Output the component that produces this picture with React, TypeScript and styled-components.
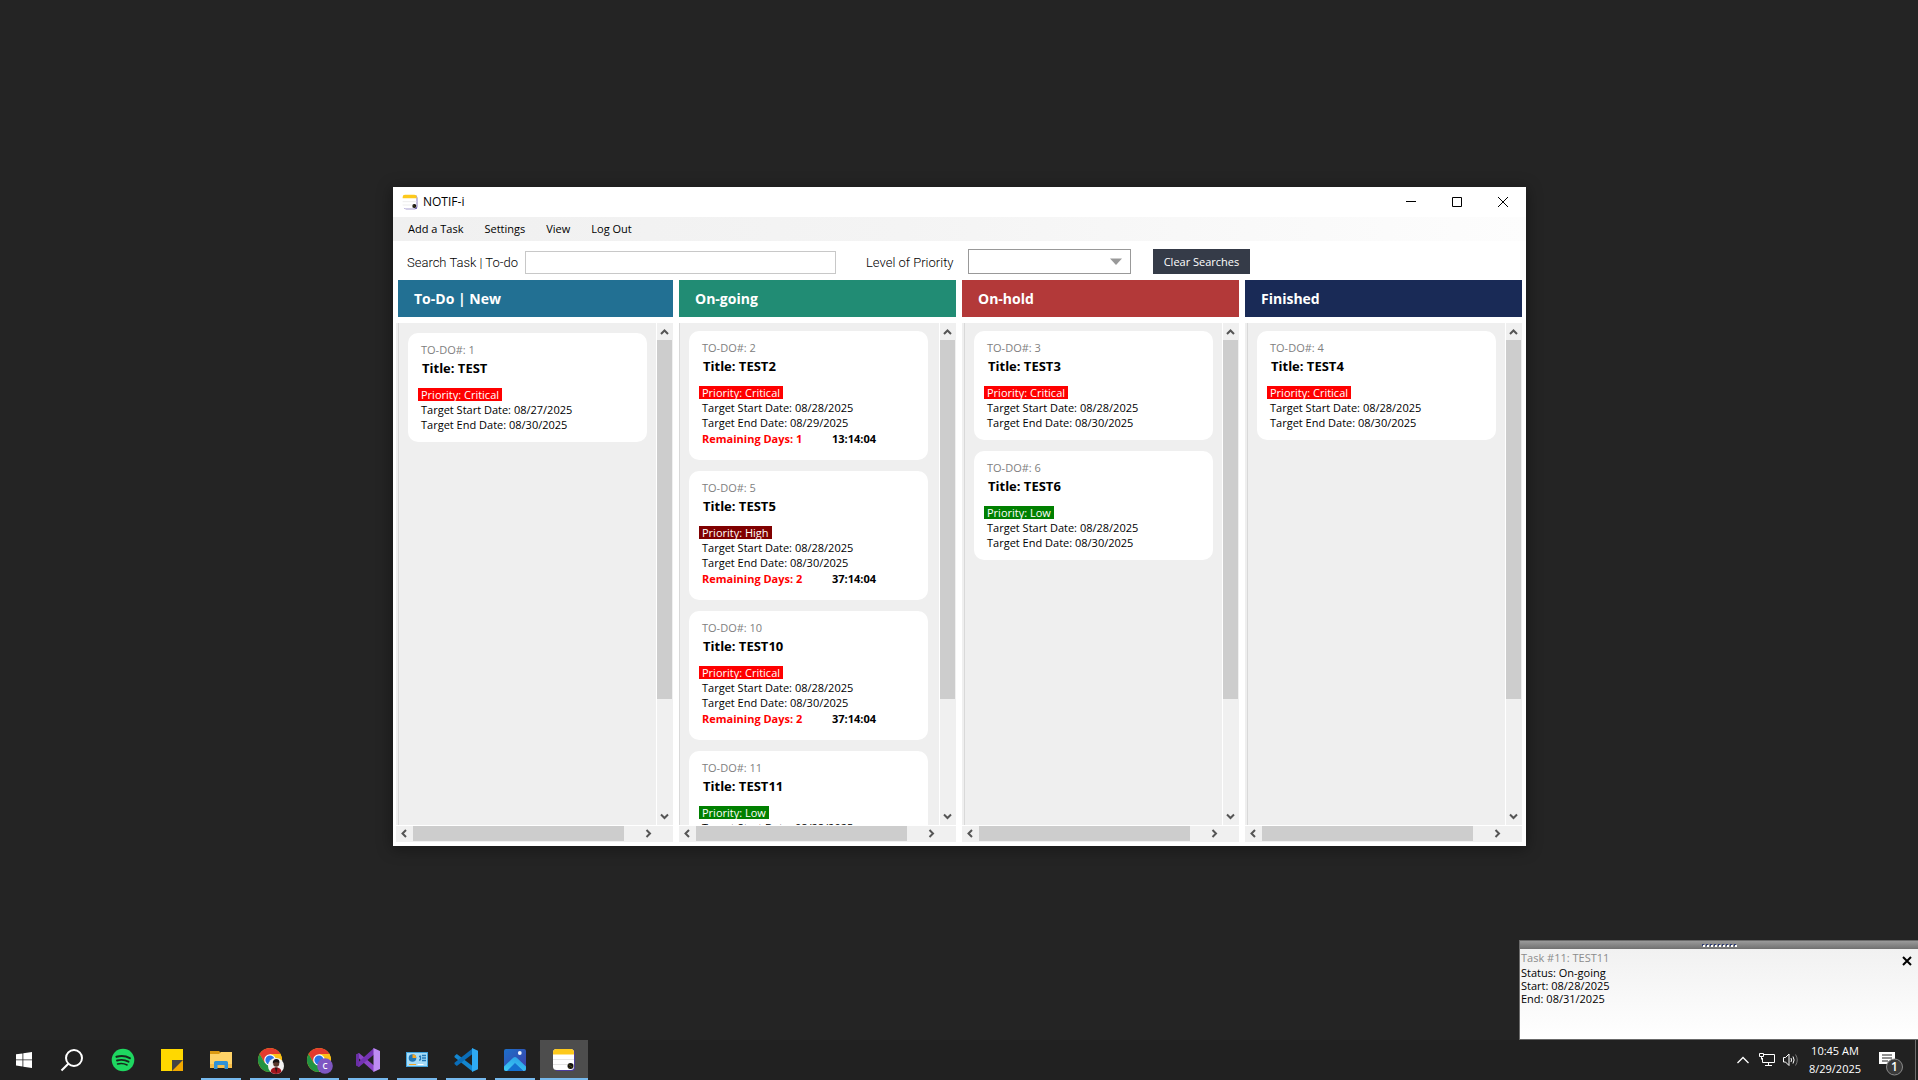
import React from 'react';
import styled, { createGlobalStyle, css } from 'styled-components';

const GlobalStyle = createGlobalStyle`
  *, *::before, *::after { box-sizing: border-box; }
  body { margin: 0; background: #242424; }
  body, button, input, select { font-family: "Open Sans", "Noto Sans", sans-serif; font-size: 11px; }
  button { margin: 0; padding: 0; border: 0; background: none; color: inherit; cursor: pointer; }
  svg { display: block; flex: none; }
`;

/* ---------- desktop ---------- */

const Desktop = styled.div`
  display: flex;
  flex-direction: column;
  height: 100vh;
  overflow: hidden;
`;

const Workspace = styled.main`
  position: relative;
  flex: 1;
  min-height: 0;
  background: #242424;
`;

/* ---------- application window ---------- */

const AppWindow = styled.section`
  position: absolute;
  inset: 187px 392px 194px 393px;
  display: flex;
  flex-direction: column;
  background: #fff;
  box-shadow: 0 2px 14px 1px rgba(0, 0, 0, 0.38);
`;

const TitleBar = styled.header`
  display: flex;
  align-items: center;
  height: 30px;
  padding-left: 9px;
`;

const WindowTitle = styled.h1`
  flex: 1;
  margin: 0 0 0 5px;
  font-size: 12px;
  font-weight: 400;
  line-height: 16px;
  color: #000;
`;

const WindowButton = styled.button`
  display: flex;
  align-items: center;
  justify-content: center;
  width: 46px;
  height: 28px;
`;

const MenuBar = styled.nav`
  display: flex;
  align-items: center;
  gap: 21px;
  height: 24px;
  padding-left: 15px;
  background: linear-gradient(to right, #f0f0f0, #f4f4f4 45%, #fdfdfd);
`;

const MenuButton = styled.button`
  font-weight: 500;
  line-height: 24px;
  color: #000;
`;

const Toolbar = styled.form`
  display: flex;
  align-items: flex-end;
  height: 39px;
  padding: 0 14px 6px;
`;

const Field = styled.div`
  display: flex;
  align-items: flex-end;
  min-width: 0;
`;

const FieldLabel = styled.label<{ $width: number }>`
  width: ${(p) => p.$width}px;
  flex: none;
  font-family: Roboto, "Open Sans", sans-serif;
  font-size: 13px;
  font-weight: 300;
  line-height: 22px;
  white-space: nowrap;
  color: #000;
`;

const SearchInput = styled.input`
  width: 311px;
  height: 23px;
  margin-right: 30px;
  padding: 0 4px;
  border: 1px solid #c8c8c8;
  border-radius: 0;
  background: #fff;
  outline: none;
`;

const SelectBox = styled.div`
  display: grid;
  align-items: center;
  width: 163px;
  margin-right: 22px;

  > * { grid-area: 1 / 1; }
  svg { justify-self: end; margin-right: 9px; pointer-events: none; }
`;

const PrioritySelect = styled.select`
  width: 100%;
  height: 25px;
  padding: 0 6px;
  border: 1px solid #999;
  border-radius: 0;
  background: #fff;
  appearance: none;
  outline: none;
`;

const ClearButton = styled.button`
  width: 97px;
  height: 25px;
  background: #353b48;
  color: #fff;
`;

/* ---------- board ---------- */

const Board = styled.div`
  display: grid;
  flex: 1;
  grid-template-columns: repeat(4, minmax(0, 1fr));
  gap: 6px;
  min-height: 0;
  padding: 0 4px 4px 3px;
`;

const ColumnBox = styled.section`
  display: flex;
  flex-direction: column;
  min-height: 0;
`;

const ColumnHeader = styled.h2<{ $color: string; $gutter: number }>`
  margin: 0 0 6px ${(p) => p.$gutter}px;
  padding: 1px 0 0 16px;
  background: ${(p) => p.$color};
  color: #fff;
  font-size: 14px;
  font-weight: 700;
  line-height: 36px;
`;

const ScrollPanel = styled.div`
  display: grid;
  grid-template: minmax(0, 1fr) 16px / minmax(0, 1fr) 16px;
  gap: 1px;
  flex: 1;
  min-height: 0;
`;

const CardList = styled.ul<{ $line: number; $gutter: number }>`
  display: flex;
  flex-direction: column;
  gap: 11px;
  margin: 0;
  padding: ${(p) => p.$gutter + 8}px ${(p) => 11 - p.$line}px 0 ${(p) => p.$line + 10}px;
  list-style: none;
  overflow: hidden;
  background: linear-gradient(
    to right,
    #efefef ${(p) => p.$line}px,
    #d9d9d9 ${(p) => p.$line}px ${(p) => p.$line + 1}px,
    #efefef ${(p) => p.$line + 1}px
  );
`;

const ScrollTrack = styled.div<{ $horizontal?: boolean }>`
  display: flex;
  flex-direction: column;
  padding-right: 1px;
  background: #f0f0f0;
  ${(p) => p.$horizontal && css`
    flex-direction: row;
    grid-column: 1 / -1;
    padding: 0 17px 1px 0;
  `}
`;

const ScrollThumb = styled.div<{ $share: number }>`
  flex: ${(p) => p.$share} 1 0;
  background: #cdcdcd;
`;

const ScrollRest = styled.div<{ $share: number }>`
  flex: ${(p) => p.$share} 1 0;
`;

const ScrollArrow = styled.button`
  display: flex;
  align-items: center;
  justify-content: center;
  flex: 0 0 17px;
`;

const CardBox = styled.li`
  display: flex;
  flex: none;
  flex-direction: column;
  align-items: flex-start;
  padding: 9px 10px 10px;
  border-radius: 10px;
  background: #fff;
  color: #000;
`;

const CardId = styled.span`
  padding-left: 3px;
  line-height: 16px;
  color: #808080;
`;

const CardTitle = styled.h3`
  margin: 0 0 10px;
  padding-left: 4px;
  font-size: 13px;
  font-weight: 700;
  line-height: 20px;
`;

const PriorityTag = styled.span<{ $color: string }>`
  margin-bottom: 1px;
  padding: 0 3px;
  background: ${(p) => p.$color};
  color: #fff;
  line-height: 13px;
`;

const CardDate = styled.span`
  padding-left: 3px;
  line-height: 15px;
`;

const Countdown = styled.div`
  display: grid;
  grid-template-columns: 130px auto;
  margin-bottom: 2px;
  padding-left: 3px;
  font-weight: 700;
  line-height: 18px;
`;

const Remaining = styled.span`
  color: #f00;
`;

/* ---------- toast ---------- */

const Toast = styled.aside`
  position: absolute;
  right: 0;
  bottom: 0;
  width: 399px;
  height: 100px;
  border: solid #6a6a6a;
  border-width: 1px 0 1px 1px;
  background: linear-gradient(#f0f0f0, #fff);
  color: #000;
`;

const ToastGrip = styled.div`
  display: flex;
  align-items: center;
  justify-content: center;
  height: 8px;
  background: linear-gradient(#9a9a9a, #707070);
`;

const ToastBody = styled.div`
  display: flex;
  justify-content: space-between;
  align-items: flex-start;
  padding: 0 5px 0 1px;
`;

const ToastText = styled.div`
  display: flex;
  flex-direction: column;
  line-height: 13px;
`;

const ToastTitle = styled.strong`
  font-weight: 400;
  line-height: 17px;
  color: #8c8c8c;
`;

const ToastClose = styled.button`
  display: flex;
  align-items: center;
  justify-content: center;
  width: 12px;
  height: 24px;
`;

/* ---------- taskbar ---------- */

const Taskbar = styled.footer`
  display: flex;
  justify-content: space-between;
  flex: none;
  height: 40px;
  background: #212121;
  color: #fff;
`;

const TaskGroup = styled.div`
  display: flex;
  gap: 1px;
`;

const SystemGroup = styled.div`
  display: flex;
  margin-right: 2px;
`;

const TaskButton = styled.button<{ $state?: 'open' | 'active' }>`
  display: flex;
  align-items: center;
  justify-content: center;
  width: 48px;
  height: 40px;
  ${(p) => p.$state === 'open' && css`
    background: linear-gradient(#76b9ed, #76b9ed) center bottom / 40px 2px no-repeat;
  `}
  ${(p) => p.$state === 'active' && css`
    background: linear-gradient(#76b9ed, #76b9ed) center bottom / 100% 2px no-repeat, #4d4d4d;
  `}
`;

const Tray = styled.div`
  display: flex;
  align-items: stretch;
  padding-right: 2px;
`;

const TrayButton = styled.button<{ $width?: number }>`
  display: flex;
  align-items: center;
  justify-content: center;
  width: ${(p) => p.$width ?? 24}px;
`;

const Clock = styled.time`
  display: flex;
  flex-direction: column;
  justify-content: center;
  width: 64px;
  text-align: center;
  line-height: 18px;
`;

const ShowDesktop = styled.button`
  width: 1px;
  background: #6e6e6e;
`;

/* ---------- icons ---------- */

const NotifIcon = ({ size = 24 }: { size?: number }) => (
  <svg width={size} height={size} viewBox="0 0 24 24">
    <rect x="2.5" y="2" width="20.5" height="21" rx="3.5" fill="#4c3d9e" />
    <rect x="1" y="1" width="21" height="21" rx="3.5" fill="#fff" />
    <path d="M1 6.500V4.500A3.500 3.500 0 0 1 4.500 1h14A3.500 3.500 0 0 1 22 4.500V6.500z" fill="#fdc91c" />
    <path d="M1 11.500h21M1 16.500h21" stroke="#e4e4e4" strokeWidth="1" />
    <circle cx="18.500" cy="18" r="3" fill="#111" />
    <path d="M16.500 16.500l4 3M16.500 20l1-1" stroke="#5a4d12" strokeWidth="1" />
  </svg>
);

const StartIcon = () => (
  <svg width="24" height="24" viewBox="0 0 24 24" fill="#fff">
    <path d="M4 6.300l6.500-.9v6.100H4zM11.300 5.300L20 4v7.500h-8.700zM4 12.300h6.500v6.200L4 17.600zM11.300 12.300H20V20l-8.700-1.300z" />
  </svg>
);

const SearchIcon = () => (
  <svg width="24" height="24" viewBox="0 0 24 24" fill="none" stroke="#fff" strokeWidth="2">
    <circle cx="14" cy="10" r="8" />
    <path d="M8.300 15.700L1.500 22.500" />
  </svg>
);

const SpotifyIcon = () => (
  <svg width="24" height="24" viewBox="0 0 24 24" fill="none" stroke="#16281c" strokeLinecap="round">
    <circle cx="12" cy="12" r="11.300" fill="#1ed760" stroke="none" />
    <path d="M5.500 8.800c4.500-1.300 9.500-.8 13.300 1.300" strokeWidth="2.200" />
    <path d="M6 12.500c4-1.100 8.200-.6 11.500 1.200" strokeWidth="1.900" />
    <path d="M6.500 15.900c3.400-.9 6.800-.5 9.600 1.100" strokeWidth="1.500" />
  </svg>
);

const StickyIcon = () => (
  <svg width="24" height="24" viewBox="0 0 24 24">
    <path d="M1 1h22v22H1z" fill="#ffd800" />
    <path d="M12 12h11v11H12z" fill="#f2a900" />
    <path d="M12 12h11L12 23z" fill="#444" />
  </svg>
);

const FolderIcon = () => (
  <svg width="24" height="24" viewBox="0 0 24 24">
    <path d="M1 3h9l2 2h11v4H1z" fill="#dc9a12" />
    <path d="M1 6h9l2-2h11v16H1z" fill="#ffd367" />
    <path d="M1 16h22v4H1z" fill="#f6bd49" />
    <path d="M5 21v-6.500a1.500 1.500 0 0 1 1.500-1.500h11a1.500 1.500 0 0 1 1.500 1.500V21h-3.500v-4h-7v4z" fill="#2f92d8" />
  </svg>
);

const ChromeDisc = () => (
  <>
    <circle cx="12" cy="12" r="12" fill="#fbc116" />
    <path d="M12 6h10.400A12 12 0 0 0 1.600 6L6.800 15 12 12z" fill="#e33b2e" />
    <path d="M1.600 6A12 12 0 0 0 12 24l5.200-9L12 12 6.800 15z" fill="#229342" />
    <path d="M22.400 6H12v6l5.200 3L12 24A12 12 0 0 0 22.400 6z" fill="#fbc116" />
    <circle cx="12" cy="12" r="5.800" fill="#fff" />
    <circle cx="12" cy="12" r="4.600" fill="#2a74e6" />
  </>
);

const ChromeUserIcon = () => (
  <svg width="24" height="24" viewBox="0 0 24 24" overflow="visible">
    <ChromeDisc />
    <circle cx="18" cy="18" r="8" fill="#f3f3f3" />
    <path d="M12.500 23.800c.5-3.300 2.500-4.300 5.500-4.300s5 1 5.500 4.300A8 8 0 0 1 18 26a8 8 0 0 1-5.500-2.200z" fill="#a3141c" />
    <path d="M16.800 19.500h2.800L18.300 25z" fill="#2b1414" />
    <circle cx="18.200" cy="15.800" r="3" fill="#5a382c" />
    <path d="M14.800 15.500c-.3-3 1.300-4.500 3.500-4.500s3.600 1.600 3.100 4.200c-1.600-1.400-4.600-1.400-6.600.3z" fill="#181212" />
  </svg>
);

const ChromeProfileIcon = () => (
  <svg width="24" height="24" viewBox="0 0 24 24" overflow="visible">
    <ChromeDisc />
    <circle cx="18" cy="18" r="7.800" fill="#7e57c2" />
    <text x="18" y="21" textAnchor="middle" fontSize="8" fontWeight="600" fill="#fff">C</text>
  </svg>
);

const VisualStudioIcon = () => (
  <svg width="24" height="24" viewBox="0 0 24 24">
    <path d="M0 6.800L3 5l15 12.500V24L0 7.800z" fill="#8b46c8" />
    <path d="M0 17.200L3 19 18 6.500V0L0 16.200z" fill="#7432b4" />
    <path d="M0 6.800L3 5v14l-3-1.800z" fill="#6a2fa6" />
    <path d="M17.500 0L24 3v18l-6.500 3z" fill="#bd8cf3" />
  </svg>
);

const ControlPanelIcon = () => (
  <svg width="24" height="24" viewBox="0 0 24 24">
    <path d="M1 4h22v15H1z" fill="#3fa3dd" />
    <path d="M2 5h20v13H2z" fill="#a6dcf8" />
    <circle cx="7.500" cy="10" r="3.800" fill="#2277b5" />
    <path d="M7.500 10V6.200a3.800 3.800 0 0 1 3.800 3.800z" fill="#f6a623" />
    <path d="M14 8.500h1.500M14 12h1.500M15.500 12V7.500M17 7.500h4M17 10h4M17 12.500h4" stroke="#2277b5" strokeWidth="1.300" fill="none" />
    <path d="M4 16.500h7" stroke="#f6a623" strokeWidth="1" />
    <path d="M12.500 16.500h6" stroke="#fff" strokeWidth="1" />
  </svg>
);

const VsCodeIcon = () => (
  <svg width="24" height="24" viewBox="0 0 24 24">
    <path d="M.5 8L2.800 6l15.700 12v5.500L.5 9.200z" fill="#1486cf" />
    <path d="M.5 16l2.300 2L18.500 6V.5L.5 14.800z" fill="#0a6db8" />
    <path d="M18 0l6 2.800v18.400L18 24z" fill="#2eaaf3" />
  </svg>
);

const PhotosIcon = () => (
  <svg width="24" height="24" viewBox="0 0 24 24">
    <defs>
      <linearGradient id="photo-sky" x1="0" y1="0" x2="1" y2="1">
        <stop offset="0" stopColor="#1c6fc9" />
        <stop offset="1" stopColor="#3f3fa8" />
      </linearGradient>
      <linearGradient id="photo-hill" x1="0" y1="1" x2="0.700" y2="0">
        <stop offset="0" stopColor="#3ed0f7" />
        <stop offset="1" stopColor="#2ba0e6" />
      </linearGradient>
      <clipPath id="photo-frame"><rect x="1" y="1" width="22" height="22" rx="2" /></clipPath>
    </defs>
    <g clipPath="url(#photo-frame)">
      <path d="M1 1h22v22H1z" fill="url(#photo-sky)" />
      <path d="M3 24l9-9.500L21 24z" fill="#1470d0" />
      <path d="M-1 20.500L10.200 9.800q1.800-1.600 3.600 0L25 20.500V24h-3.500L12 15 3 24h-4z" fill="url(#photo-hill)" />
    </g>
    <circle cx="16.800" cy="5" r="1.900" fill="#eef4ff" />
  </svg>
);

const arrowPaths = {
  up: 'M4 10L7.500 6.500 11 10',
  down: 'M4 5.500L7.500 9 11 5.500',
  left: 'M9 4L5.500 7.500 9 11',
  right: 'M6.500 4L10 7.500 6.500 11',
};

const ArrowIcon = ({ dir }: { dir: keyof typeof arrowPaths }) => (
  <svg width="15" height="15" viewBox="0 0 15 15" fill="none" stroke="#555" strokeWidth="2">
    <path d={arrowPaths[dir]} />
  </svg>
);

/* ---------- data ---------- */

type Priority = 'Critical' | 'High' | 'Low';

interface Task {
  id: number;
  priority: Priority;
  start: string;
  end: string;
  days?: number;
  time?: string;
}

interface ColumnData {
  title: string;
  color: string;
  /** width of the strip left of the panel's edge line */
  line: number;
  /** extra inset of the header and the first card */
  gutter: number;
  tasks: Task[];
}

const priorityColor: Record<Priority, string> = {
  Critical: '#ff0000',
  High: '#800000',
  Low: '#008000',
};

const columns: ColumnData[] = [
  {
    title: 'To-Do | New', color: '#227093', line: 2, gutter: 2,
    tasks: [{ id: 1, priority: 'Critical', start: '08/27/2025', end: '08/30/2025' }],
  },
  {
    title: 'On-going', color: '#218c74', line: 0, gutter: 0,
    tasks: [
      { id: 2, priority: 'Critical', start: '08/28/2025', end: '08/29/2025', days: 1, time: '13:14:04' },
      { id: 5, priority: 'High', start: '08/28/2025', end: '08/30/2025', days: 2, time: '37:14:04' },
      { id: 10, priority: 'Critical', start: '08/28/2025', end: '08/30/2025', days: 2, time: '37:14:04' },
      { id: 11, priority: 'Low', start: '08/28/2025', end: '08/31/2025' },
    ],
  },
  {
    title: 'On-hold', color: '#b33939', line: 2, gutter: 0,
    tasks: [
      { id: 3, priority: 'Critical', start: '08/28/2025', end: '08/30/2025' },
      { id: 6, priority: 'Low', start: '08/28/2025', end: '08/30/2025' },
    ],
  },
  {
    title: 'Finished', color: '#192a56', line: 2, gutter: 0,
    tasks: [{ id: 4, priority: 'Critical', start: '08/28/2025', end: '08/30/2025' }],
  },
];

const Card = ({ task }: { task: Task }) => (
  <CardBox>
    <CardId>TO-DO#: {task.id}</CardId>
    <CardTitle>Title: TEST{task.id === 1 ? '' : task.id}</CardTitle>
    <PriorityTag $color={priorityColor[task.priority]}>Priority: {task.priority}</PriorityTag>
    <CardDate>Target Start Date: {task.start}</CardDate>
    <CardDate>Target End Date: {task.end}</CardDate>
    {task.time && (
      <Countdown>
        <Remaining>Remaining Days: {task.days}</Remaining>
        <span>{task.time}</span>
      </Countdown>
    )}
  </CardBox>
);

const Column = ({ data }: { data: ColumnData }) => (
  <ColumnBox>
    <ColumnHeader $color={data.color} $gutter={data.gutter}>{data.title}</ColumnHeader>
    <ScrollPanel>
      <CardList $line={data.line} $gutter={data.gutter}>
        {data.tasks.map((task) => <Card key={task.id} task={task} />)}
      </CardList>
      <ScrollTrack>
        <ScrollArrow aria-label="Scroll up"><ArrowIcon dir="up" /></ScrollArrow>
        <ScrollThumb $share={359} />
        <ScrollRest $share={109} />
        <ScrollArrow aria-label="Scroll down"><ArrowIcon dir="down" /></ScrollArrow>
      </ScrollTrack>
      <ScrollTrack $horizontal>
        <ScrollArrow aria-label="Scroll left"><ArrowIcon dir="left" /></ScrollArrow>
        <ScrollThumb $share={211} />
        <ScrollRest $share={15} />
        <ScrollArrow aria-label="Scroll right"><ArrowIcon dir="right" /></ScrollArrow>
      </ScrollTrack>
    </ScrollPanel>
  </ColumnBox>
);

const apps: { name: string; icon: React.ReactNode; state?: 'open' | 'active' }[] = [
  { name: 'Spotify', icon: <SpotifyIcon /> },
  { name: 'Sticky Notes', icon: <StickyIcon /> },
  { name: 'File Explorer', icon: <FolderIcon />, state: 'open' },
  { name: 'Chrome', icon: <ChromeUserIcon />, state: 'open' },
  { name: 'Chrome, second profile', icon: <ChromeProfileIcon />, state: 'open' },
  { name: 'Visual Studio', icon: <VisualStudioIcon />, state: 'open' },
  { name: 'Control Panel', icon: <ControlPanelIcon />, state: 'open' },
  { name: 'Visual Studio Code', icon: <VsCodeIcon />, state: 'open' },
  { name: 'Photos', icon: <PhotosIcon />, state: 'open' },
  { name: 'NOTIF-i', icon: <NotifIcon />, state: 'active' },
];

const menuItems = ['Add a Task', 'Settings', 'View', 'Log Out'];
const gripDots = [0, 4, 8, 12, 16, 20, 24, 28, 32];

export default function App() {
  return (
    <Desktop>
      <GlobalStyle />
      <Workspace>
        <AppWindow>
          <TitleBar>
            <NotifIcon size={16} />
            <WindowTitle>NOTIF-i</WindowTitle>
            <WindowButton aria-label="Minimize">
              <svg width="10" height="10" viewBox="0 0 10 10"><path d="M0 4h10v1H0z" fill="#000" /></svg>
            </WindowButton>
            <WindowButton aria-label="Maximize">
              <svg width="10" height="10" viewBox="0 0 10 10" fill="none" stroke="#000"><path d="M.5.5h9v9h-9z" /></svg>
            </WindowButton>
            <WindowButton aria-label="Close">
              <svg width="10" height="10" viewBox="0 0 10 10" fill="none" stroke="#000"><path d="M0 0l10 10M10 0L0 10" /></svg>
            </WindowButton>
          </TitleBar>

          <MenuBar>
            {menuItems.map((item) => <MenuButton key={item}>{item}</MenuButton>)}
          </MenuBar>

          <Toolbar onSubmit={(e) => e.preventDefault()}>
            <Field>
              <FieldLabel htmlFor="search" $width={118}>Search Task | To-do</FieldLabel>
              <SearchInput id="search" type="text" />
            </Field>
            <Field>
              <FieldLabel htmlFor="priority" $width={102}>Level of Priority</FieldLabel>
              <SelectBox>
                <PrioritySelect id="priority" defaultValue="">
                  <option value="" />
                  <option>Critical</option>
                  <option>High</option>
                  <option>Low</option>
                </PrioritySelect>
                <svg width="12" height="7" viewBox="0 0 12 7"><path d="M0 .5h12L6 7z" fill="#999" /></svg>
              </SelectBox>
            </Field>
            <ClearButton type="reset">Clear Searches</ClearButton>
          </Toolbar>

          <Board>
            {columns.map((column) => <Column key={column.title} data={column} />)}
          </Board>
        </AppWindow>

        <Toast>
          <ToastGrip>
            <svg width="35" height="3" viewBox="0 0 35 3">
              {gripDots.map((x) => (
                <g key={x}>
                  <path d={`M${x} 0h2v2h-2z`} fill="#2f3d73" />
                  <path d={`M${x + 1} 1h2v2h-2z`} fill="#fff" />
                </g>
              ))}
            </svg>
          </ToastGrip>
          <ToastBody>
            <ToastText>
              <ToastTitle>Task #11: TEST11</ToastTitle>
              <span>Status: On-going</span>
              <span>Start: 08/28/2025</span>
              <span>End: 08/31/2025</span>
            </ToastText>
            <ToastClose aria-label="Dismiss">
              <svg width="10" height="10" viewBox="0 0 10 10" stroke="#000" strokeWidth="2"><path d="M1 1l8 8M9 1L1 9" /></svg>
            </ToastClose>
          </ToastBody>
        </Toast>
      </Workspace>

      <Taskbar>
        <TaskGroup>
          <SystemGroup>
            <TaskButton aria-label="Start"><StartIcon /></TaskButton>
            <TaskButton aria-label="Search"><SearchIcon /></TaskButton>
          </SystemGroup>
          {apps.map((app) => (
            <TaskButton key={app.name} aria-label={app.name} $state={app.state}>{app.icon}</TaskButton>
          ))}
        </TaskGroup>
        <Tray>
          <TrayButton aria-label="Hidden icons">
            <svg width="12" height="8" viewBox="0 0 12 8" fill="none" stroke="#fff" strokeWidth="1.300"><path d="M.5 7L6 1.500 11.500 7" /></svg>
          </TrayButton>
          <TrayButton aria-label="Network">
            <svg width="16" height="14" viewBox="0 0 16 14" fill="none" stroke="#fff">
              <path d="M4.500 1.500h11v8h-12V5M9.500 9.500v3M6 12.500h7M.5.500h4v3h-4zM2.500 3.500v3" />
            </svg>
          </TrayButton>
          <TrayButton aria-label="Volume">
            <svg width="16" height="14" viewBox="0 0 16 14" fill="none" stroke="#fff">
              <path d="M.5 4.500h2l3.500-3.500v11.500L2.500 9h-2z" />
              <path d="M8 5q1 2 0 4M10 3.500q2.200 3.500 0 7" />
              <path d="M12.500 1.500q3.500 5.500 0 11" stroke="#777" />
            </svg>
          </TrayButton>
          <Clock>
            <span>10:45 AM</span>
            <span>8/29/2025</span>
          </Clock>
          <TrayButton $width={48} aria-label="Notifications, 1 new">
            <svg width="24" height="24" viewBox="0 0 24 24" overflow="visible">
              <path d="M0 4h16v12h-5l-3 3v-3H0z" fill="#fff" />
              <path d="M3 7h10M3 10h10M3 13h6" stroke="#212121" />
              <circle cx="15.500" cy="19" r="8" fill="#3a3a3a" stroke="#8a8a8a" />
              <text x="15.500" y="23" textAnchor="middle" fontSize="12" fontWeight="600" fill="#fff">1</text>
            </svg>
          </TrayButton>
          <ShowDesktop aria-label="Show desktop" />
        </Tray>
      </Taskbar>
    </Desktop>
  );
}
